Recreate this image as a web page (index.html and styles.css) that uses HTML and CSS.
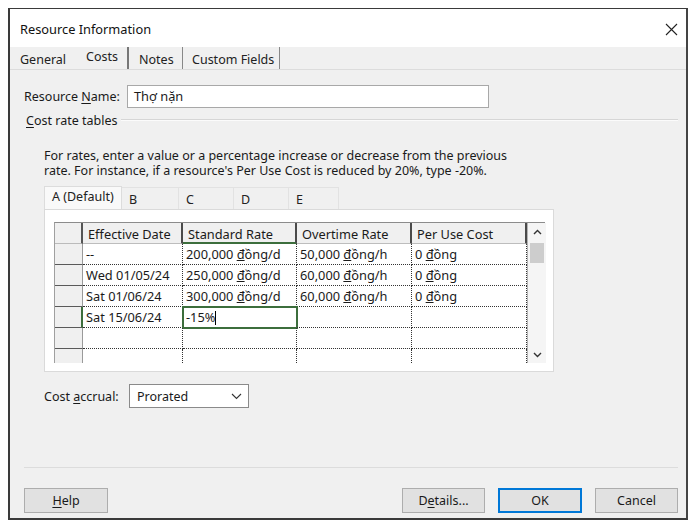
FILE: index.html
```html
<!DOCTYPE html>
<html>
<head>
<meta charset="utf-8">
<link rel="stylesheet" href="styles.css">
</head>
<body>
<div class="dialog">
  <div class="titlebar">
    <span class="title">Resource Information</span>
    <svg class="close" width="13" height="13" viewBox="0 0 13 13"><path d="M1 1L12 12M12 1L1 12" stroke="#222" stroke-width="1.1" fill="none"/></svg>
  </div>
  <div class="tabstrip">
    <div class="tab t-general">General</div>
    <div class="tab t-costs">Costs</div>
    <div class="tab t-notes">Notes</div>
    <div class="tab t-custom">Custom Fields</div>
  </div>
  <div class="content">
    <div class="name-row">
      <span class="lbl">Resource <u>N</u>ame:</span>
      <div class="input">Thợ nặn</div>
    </div>
    <div class="group">
      <span><u>C</u>ost rate tables</span>
      <div class="group-line"></div>
    </div>
    <div class="info">
      <div class="info-line">For rates, enter a value or a percentage increase or decrease from the previous</div>
      <div class="info-line">rate. For instance, if a resource's Per Use Cost is reduced by 20%, type -20%.</div>
    </div>
    <div class="itabs">
      <div class="itab sel">A (Default)</div>
      <div class="itab w-b">B</div>
      <div class="itab w-c">C</div>
      <div class="itab w-d">D</div>
      <div class="itab w-e">E</div>
    </div>
    <div class="panel">
      <div class="gridwrap">
        <div class="grid">
          <div class="rh hdr"></div>
          <div class="ch">Effective Date</div>
          <div class="ch active">Standard Rate</div>
          <div class="ch">Overtime Rate</div>
          <div class="ch">Per Use Cost</div>

          <div class="rh"></div>
          <div class="c">--</div>
          <div class="c">200,000 <span class="u">đ</span>ồng/d</div>
          <div class="c">50,000 <span class="u">đ</span>ồng/h</div>
          <div class="c">0 <span class="u">đ</span>ồng</div>

          <div class="rh"></div>
          <div class="c">Wed 01/05/24</div>
          <div class="c">250,000 <span class="u">đ</span>ồng/d</div>
          <div class="c">60,000 <span class="u">đ</span>ồng/h</div>
          <div class="c">0 <span class="u">đ</span>ồng</div>

          <div class="rh"></div>
          <div class="c">Sat 01/06/24</div>
          <div class="c">300,000 <span class="u">đ</span>ồng/d</div>
          <div class="c">60,000 <span class="u">đ</span>ồng/h</div>
          <div class="c">0 <span class="u">đ</span>ồng</div>

          <div class="rh cur"></div>
          <div class="c">Sat 15/06/24</div>
          <div class="c selcell">-15%<span class="caret"></span></div>
          <div class="c"></div>
          <div class="c"></div>

          <div class="rh"></div>
          <div class="c"></div>
          <div class="c"></div>
          <div class="c"></div>
          <div class="c"></div>

          <div class="rh last"></div>
          <div class="c last"></div>
          <div class="c last"></div>
          <div class="c last"></div>
          <div class="c last"></div>
        </div>
        <div class="vscroll">
          <svg class="arrow" width="19" height="18" viewBox="0 0 19 18"><path d="M6 11L9.5 7.5L13 11" stroke="#333" stroke-width="1.4" fill="none"/></svg>
          <div class="thumb"></div>
          <div class="track"></div>
          <svg class="arrow" width="19" height="16" viewBox="0 0 19 16"><path d="M6 6L9.5 9.5L13 6" stroke="#333" stroke-width="1.4" fill="none"/></svg>
        </div>
      </div>
    </div>
    <div class="accrual-row">
      <span class="lbl2">Cost <u>a</u>ccrual:</span>
      <div class="select">
        <span>Prorated</span>
        <svg width="11" height="7" viewBox="0 0 11 7"><path d="M1 1L5.5 5.5L10 1" stroke="#333" stroke-width="1.1" fill="none"/></svg>
      </div>
    </div>
    <div class="sep"></div>
    <div class="buttons">
      <div class="btn help"><span><u>H</u>elp</span></div>
      <div class="spacer"></div>
      <div class="btn"><span>D<u>e</u>tails...</span></div>
      <div class="btn ok"><span>OK</span></div>
      <div class="btn"><span>Cancel</span></div>
    </div>
  </div>
</div>
</body>
</html>
```
FILE: styles.css
```css
* { box-sizing: border-box; }
html, body { margin: 0; padding: 0; background: #fff; }
body {
  font-family: "Noto Sans", "Open Sans", sans-serif;
  font-size: 12.5px;
  color: #1a1a1a;
}
u { text-decoration: underline; text-underline-offset: 2px; }
.dialog {
  margin: 8px 0 0 8px;
  width: 680px;
  height: 512px;
  border-top: 1px solid #3a3a3a;
  border-left: 2px solid #3a3a3a;
  border-right: 2px solid #444;
  border-bottom: 2px solid #3a3a3a;
  background: #f0f0f0;
  display: flex;
  flex-direction: column;
}
.titlebar {
  height: 38px;
  background: #fff;
  display: flex;
  align-items: center;
  justify-content: space-between;
  padding: 2px 8px 0 10px;
}
.title { font-size: 12.8px; color: #111; }
.tabstrip {
  height: 23px;
  display: flex;
  border-bottom: 1px solid #dcdcdc;
  background: #f0f0f0;
}
.tab {
  height: 22px;
  padding-top: 4px;
  line-height: 17px;
  color: #222;
  white-space: nowrap;
}
.t-general { width: 70px; padding-left: 10px; }
.t-costs { width: 49px; padding-left: 6px; padding-top: 1px; border-right: 2px solid #777; }
.t-notes { width: 54px; padding-left: 10px; border-right: 1px solid #888; }
.t-custom { width: 97px; padding-left: 9px; border-right: 1px solid #888; }
.content {
  flex: 1;
  display: flex;
  flex-direction: column;
}
.name-row {
  margin-top: 15px;
  height: 23px;
  display: flex;
  align-items: center;
}
.lbl { width: 117px; padding-left: 14px; white-space: nowrap; }
.input {
  width: 362px;
  height: 23px;
  background: #fff;
  border: 1px solid #a8a8a8;
  padding-left: 6px;
  line-height: 21px;
  font-size: 12.8px;
}
.group {
  margin-top: 5px;
  height: 15px;
  display: flex;
  align-items: center;
  padding-left: 16px;
  padding-right: 8px;
  line-height: 15px;
  white-space: nowrap;
}
.group-line {
  flex: 1;
  height: 2px;
  border-top: 1px solid #d6d6d6;
  border-bottom: 1px solid #fbfbfb;
  margin-left: 4px;
  margin-top: -1px;
}
.info {
  margin: 20px 0 0 34px;
  color: #1a1a1a;
}
.info-line { height: 15px; line-height: 15px; white-space: nowrap; }
.itabs {
  margin: 9px 0 0 34px;
  height: 22px;
  display: flex;
}
.itab {
  height: 22px;
  padding: 3px 0 0 7px;
  line-height: 18px;
  background: #f0f0f0;
  border-top: 1px solid #e2e2e2;
  border-right: 1px solid #e2e2e2;
  color: #222;
}
.itab.sel {
  width: 78px;
  background: #f9f9f9;
  border: 1px solid #dcdcdc;
  border-bottom: none;
  padding-left: 7px;
  padding-top: 1px;
  height: 23px;
  margin-top: -1px;
  white-space: nowrap;
}
.w-b { width: 57px; }
.w-c { width: 55px; }
.w-d { width: 55px; }
.w-e { width: 50px; }
.panel {
  margin-left: 34px;
  width: 510px;
  height: 163px;
  background: #fff;
  border: 1px solid #dadada;
  padding: 12px 0 0 9px;
}
.gridwrap {
  display: flex;
  width: 491px;
  height: 141px;
  border-top: 1px solid #8c8c8c;
  border-left: 1px solid #a0a0a0;
}
.grid {
  width: 472px;
  display: grid;
  grid-template-columns: 28px 100px 114px 115px 115px;
  grid-template-rows: 21px 21px 21px 21px 21px 21px 14px;
  font-size: 12.8px;
}
.grid > div {
  white-space: nowrap;
  overflow: hidden;
  line-height: 20px;
}
.rh {
  background: #f0f0f0;
  border-right: 1px solid #9a9a9a;
  border-bottom: 1px solid #5a5a5a;
}
.rh.hdr { border-right: 2px solid #555; border-bottom: 1px solid #bbb; }
.rh.cur { border-right: 2px solid #3c6e3c; }
.rh.last { border-bottom: none; }
.ch {
  background: #f0f0f0;
  border-right: 2px solid #4a4a4a;
  border-bottom: 1px solid #bdbdbd;
  padding-left: 5px;
  padding-top: 1px;
  color: #1a1a1a;
}
.ch.active { border-bottom: 2px solid #3c6e3c; }
.c {
  border-right: 1px dotted #333;
  border-bottom: 1px dotted #333;
  padding-left: 3px;
}
.c.last { border-bottom: none; }
.u { text-decoration: underline; text-underline-offset: 1px; }
.selcell {
  outline: 2px solid #3c6e3c;
  outline-offset: -1px;
}
.caret {
  display: inline-block;
  width: 1px;
  height: 14px;
  background: #000;
  vertical-align: -3px;
}
.vscroll {
  width: 19px;
  background: #f5f5f5;
  border-left: 1px solid #b4b4b4;
  display: flex;
  flex-direction: column;
}
.arrow { display: block; flex: none; }
.thumb { height: 20px; margin: 2px 2px 0 2px; background: #cdcdcd; flex: none; }
.track { flex: 1; }
.accrual-row {
  margin-top: 12px;
  height: 24px;
  display: flex;
  align-items: center;
  padding-left: 34px;
}
.lbl2 { width: 85px; white-space: nowrap; }
.select {
  width: 120px;
  height: 24px;
  background: #fff;
  border: 1px solid #8a8a8a;
  display: flex;
  align-items: center;
  justify-content: space-between;
  padding: 0 6px 0 7px;
}
.sep {
  margin: 59px 8px 0 14px;
  height: 1px;
  background: #dcdcdc;
}
.buttons {
  margin-top: 20px;
  height: 25px;
  display: flex;
  padding: 0 8px 0 14px;
}
.spacer { flex: 1; }
.btn {
  width: 83px;
  height: 25px;
  background: #e1e1e1;
  border: 1px solid #adadad;
  display: flex;
  align-items: center;
  justify-content: center;
  margin-left: 13px;
}
.btn.help { margin-left: 0; width: 84px; }
.btn.ok { border: 2px solid #0078d7; width: 84px; }
```
